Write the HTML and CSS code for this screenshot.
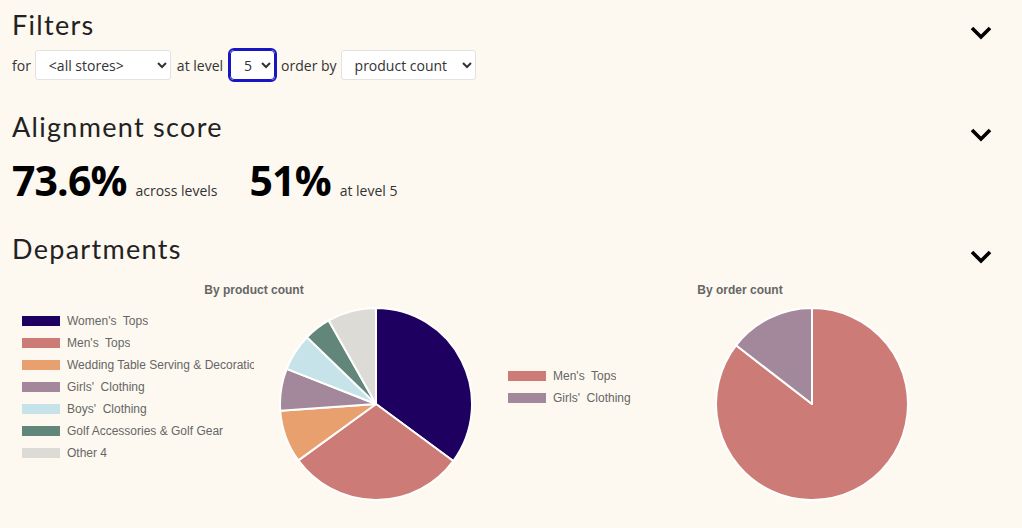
FILE: index.html
```html
<!DOCTYPE html>
<html lang="en">
<head>
<meta charset="utf-8">
<title>Dashboard</title>
<link rel="stylesheet" href="styles.css">
</head>
<body>
<main class="page">
  <section class="panel">
    <header class="panel-head">
      <h2 class="panel-title">Filters</h2>
      <svg class="chevron" width="22" height="14" viewBox="0 0 22 14"><polyline points="2,2 11,11 20,2"/></svg>
    </header>
    <div class="filters">
      <span class="label">for</span>
      <select class="sel sel-store"><option>&lt;all stores&gt;</option></select>
      <span class="label">at level</span>
      <select class="sel sel-level is-focused"><option>5</option></select>
      <span class="label">order by</span>
      <select class="sel sel-order"><option>product count</option></select>
    </div>
  </section>

  <section class="panel">
    <header class="panel-head">
      <h2 class="panel-title">Alignment score</h2>
      <svg class="chevron" width="22" height="14" viewBox="0 0 22 14"><polyline points="2,2 11,11 20,2"/></svg>
    </header>
    <div class="scores">
      <div class="score"><span class="big">73.6%</span><span class="note">across levels</span></div>
      <div class="score"><span class="big">51%</span><span class="note">at level 5</span></div>
    </div>
  </section>

  <section class="panel">
    <header class="panel-head">
      <h2 class="panel-title">Departments</h2>
      <svg class="chevron" width="22" height="14" viewBox="0 0 22 14"><polyline points="2,2 11,11 20,2"/></svg>
    </header>
    <div class="charts">
      <figure class="chart">
        <figcaption class="chart-title">By product count</figcaption>
        <div class="chart-body">
          <ul class="legend legend-wide">
            <li><i class="sw c-women"></i><span>Women's  Tops</span></li>
            <li><i class="sw c-men"></i><span>Men's  Tops</span></li>
            <li><i class="sw c-wed"></i><span>Wedding Table Serving &amp; Decorations</span></li>
            <li><i class="sw c-girls"></i><span>Girls'  Clothing</span></li>
            <li><i class="sw c-boys"></i><span>Boys'  Clothing</span></li>
            <li><i class="sw c-golf"></i><span>Golf Accessories &amp; Golf Gear</span></li>
            <li><i class="sw c-other"></i><span>Other 4</span></li>
          </ul>
          <div class="pie-area">
            <svg class="pie" width="196" height="196" viewBox="-98 -98 196 196">
              <path class="f-women" d="M0 0 L0 -96 A96 96 0 0 1 77.27 56.97 Z"/>
              <path class="f-men" d="M0 0 L77.27 56.97 A96 96 0 0 1 -77.66 56.43 Z"/>
              <path class="f-wed" d="M0 0 L-77.66 56.43 A96 96 0 0 1 -95.77 6.70 Z"/>
              <path class="f-girls" d="M0 0 L-95.77 6.70 A96 96 0 0 1 -89.32 -35.18 Z"/>
              <path class="f-boys" d="M0 0 L-89.32 -35.18 A96 96 0 0 1 -69.06 -66.69 Z"/>
              <path class="f-golf" d="M0 0 L-69.06 -66.69 A96 96 0 0 1 -47.27 -83.56 Z"/>
              <path class="f-other" d="M0 0 L-47.27 -83.56 A96 96 0 0 1 0 -96 Z"/>
            </svg>
          </div>
        </div>
      </figure>
      <figure class="chart">
        <figcaption class="chart-title">By order count</figcaption>
        <div class="chart-body">
          <ul class="legend legend-narrow">
            <li><i class="sw c-men"></i><span>Men's  Tops</span></li>
            <li><i class="sw c-girls"></i><span>Girls'  Clothing</span></li>
          </ul>
          <div class="pie-area">
            <svg class="pie" width="196" height="196" viewBox="-98 -98 196 196">
              <path class="f-men" d="M0 0 L0 -96 A96 96 0 1 1 -75.96 -58.70 Z"/>
              <path class="f-girls" d="M0 0 L-75.96 -58.70 A96 96 0 0 1 0 -96 Z"/>
            </svg>
          </div>
        </div>
      </figure>
    </div>
  </section>
</main>
</body>
</html>
```

FILE: styles.css
```css
* { box-sizing: border-box; }

html, body {
  margin: 0;
  padding: 0;
  background: #fdf9f0;
}

body {
  font-family: "Open Sans", "Liberation Sans", sans-serif;
  color: #333;
  width: 1022px;
  height: 528px;
  overflow: hidden;
}

.page {
  padding: 6px 30px 0 12px;
}

.panel-head {
  display: flex;
  justify-content: space-between;
  align-items: center;
  height: 38px;
}

.panel-title {
  margin: 0;
  font-family: Lato, "Open Sans", sans-serif;
  font-weight: 400;
  font-size: 27px;
  letter-spacing: 1.3px;
  color: #222;
  line-height: 38px;
}

.chevron {
  fill: none;
  stroke: #000;
  stroke-width: 3.6;
  stroke-linecap: butt;
  margin-top: 16px;
}

.filters {
  display: flex;
  align-items: center;
  gap: 4px;
  margin-top: 6px;
  font-size: 14px;
}

.sel {
  height: 30px;
  font-family: "Open Sans", sans-serif;
  font-size: 14px;
  color: #333;
  background: #fff;
  border: 1px solid #e2e2e2;
  border-radius: 3px;
  padding: 0 6px 0 9px;
  margin: 0 2px 0 0;
}

.sel-store { width: 136px; }
.sel-level { width: 45px; margin-left: 3px; }
.sel-order { width: 135px; }

.is-focused {
  outline: 2px solid #1616c2;
  outline-offset: 0;
  border-color: #1616c2;
  border-radius: 4px;
}

.panel:nth-child(2) { margin-top: 28px; }
.panel:nth-child(3) { margin-top: 25px; }

.scores {
  display: flex;
  align-items: baseline;
  gap: 32px;
  margin-top: 9px;
}

.score {
  display: flex;
  align-items: baseline;
  gap: 9px;
}

.big {
  font-weight: 700;
  font-size: 41px;
  color: #000;
  line-height: 50px;
  letter-spacing: -0.9px;
}

.note {
  font-size: 14px;
  color: #333;
}

.charts {
  display: grid;
  grid-template-columns: 484px 484px;
  gap: 2px;
  margin-top: 15px;
}

.chart {
  margin: 0;
  font-family: "Liberation Sans", Arial, sans-serif;
}

.chart-title {
  text-align: center;
  font-weight: 700;
  font-size: 12px;
  color: #666;
  line-height: 14px;
}

.chart-body {
  display: flex;
  height: 210px;
}

.legend {
  list-style: none;
  margin: 0 0 31px;
  padding: 0 0 0 10px;
  align-self: center;
  display: flex;
  flex-direction: column;
  gap: 8px;
}

.legend-wide { width: 244px; }
.legend-narrow { width: 144px; }

.legend li {
  display: flex;
  align-items: center;
  gap: 7px;
  height: 14px;
  font-size: 12px;
  color: #666;
  white-space: pre;
}

.legend span {
  max-width: 187px;
  overflow: hidden;
}

.sw {
  flex: none;
  width: 38px;
  height: 10px;
}

.pie-area {
  flex: 1;
  display: flex;
  justify-content: center;
  padding-top: 9px;
}

.pie path {
  stroke: #fff;
  stroke-width: 2;
  stroke-linejoin: round;
}

.c-women, .f-women { background: #1e0060; fill: #1e0060; }
.c-men, .f-men { background: #cd7b76; fill: #cd7b76; }
.c-wed, .f-wed { background: #e8a06f; fill: #e8a06f; }
.c-girls, .f-girls { background: #a3889c; fill: #a3889c; }
.c-boys, .f-boys { background: #c7e3ea; fill: #c7e3ea; }
.c-golf, .f-golf { background: #62877a; fill: #62877a; }
.c-other, .f-other { background: #dddbd5; fill: #dddbd5; }
```
